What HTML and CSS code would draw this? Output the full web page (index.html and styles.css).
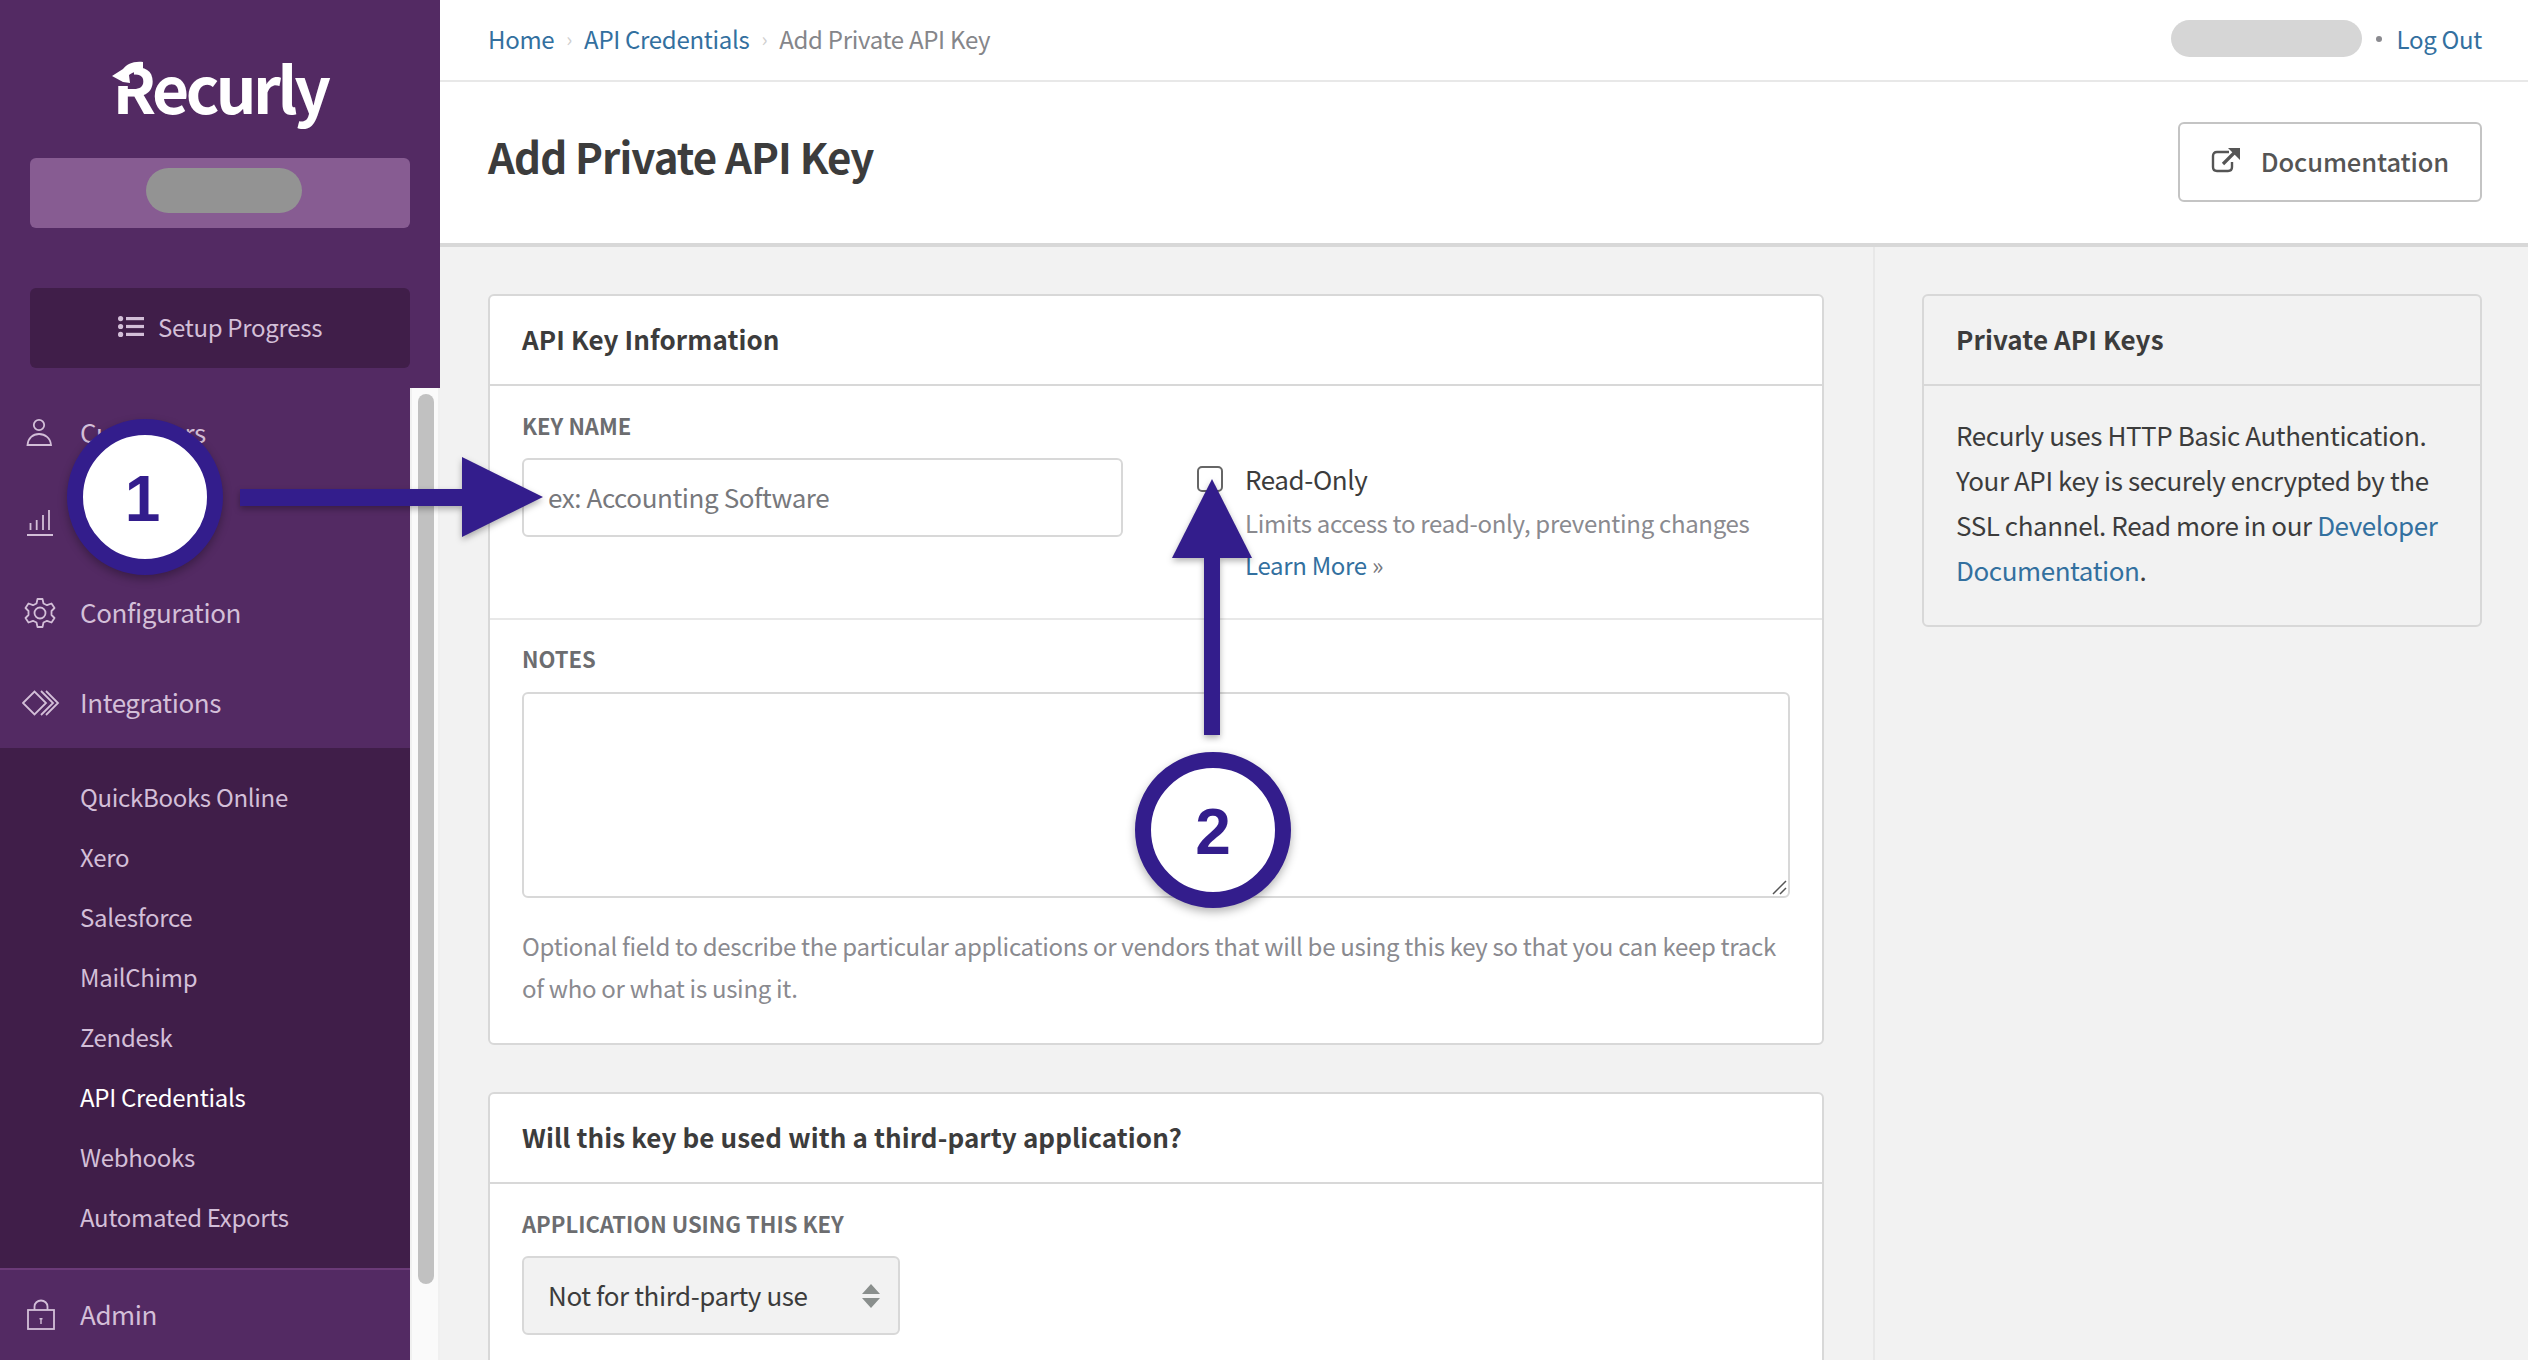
FILE: index.html
```html
<!DOCTYPE html>
<html lang="en">
<head>
<meta charset="utf-8">
<title>Add Private API Key</title>
<link rel="stylesheet" href="styles.css">
</head>
<body>
<div class="app">
  <aside class="sidebar">
    <div class="brand">
      <div class="logo">
        <span>Recurly</span>
        <svg class="logo-arrow" width="40" height="30" viewBox="0 0 40 30"><path d="M4 2 H24 V27 H4 Z" fill="#532a63"/><path d="M2 17 L13 10 C17 5 23 2 33 3 L33 13 C27 12 22 13 19 16 L20 24 L13 23 Z" fill="#fff"/></svg>
      </div>
      <div class="account"><span class="account-mask"></span></div>
      <a class="setup">
        <svg width="26" height="21" viewBox="0 0 26 21"><g fill="#d3bfd8"><circle cx="2.6" cy="2.6" r="2.6"/><circle cx="2.6" cy="10.5" r="2.6"/><circle cx="2.6" cy="18.4" r="2.6"/><rect x="8" y="1" width="18" height="3.2"/><rect x="8" y="8.9" width="18" height="3.2"/><rect x="8" y="16.8" width="18" height="3.2"/></g></svg>
        <span>Setup Progress</span>
      </a>
    </div>
    <div class="nav-wrap">
      <nav class="nav">
        <a class="nav-item">
          <svg class="nav-icon" width="36" height="30" viewBox="0 0 36 30"><g fill="none" stroke="#d3bfd8" stroke-width="1.8"><circle cx="17" cy="7" r="5.2"/><path d="M5.5 27 C6 20 11 16 17 16 C23 16 28.500 20 29 27 Z"/></g></svg>
          <span>Customers</span>
        </a>
        <a class="nav-item">
          <svg class="nav-icon" width="36" height="30" viewBox="0 0 36 30"><g fill="none" stroke="#d3bfd8" stroke-width="2"><path d="M5 27 H31"/><path d="M8.500 22 V15 M14.700 22 V12 M21 22 V7 M27 22 V2" stroke-width="1.800"/></g></svg>
          <span>Analytics</span>
        </a>
        <a class="nav-item">
          <svg class="nav-icon" width="36" height="32" viewBox="0 0 36 32"><g fill="none" stroke="#d3bfd8" stroke-width="1.8" stroke-linejoin="round"><circle cx="18" cy="16" r="5.5"/><path d="M15.5 2 H20.5 L21.5 6.5 L25 8.2 L29.5 6.5 L32.5 11 L29.5 14 V18 L32.5 21 L29.5 25.5 L25 23.8 L21.5 25.5 L20.5 30 H15.5 L14.5 25.5 L11 23.8 L6.500 25.5 L3.500 21 L6.500 18 V14 L3.500 11 L6.500 6.500 L11 8.200 L14.500 6.500 Z"/></g></svg>
          <span>Configuration</span>
        </a>
        <a class="nav-item">
          <svg class="nav-icon" width="38" height="28" viewBox="0 0 38 28"><g fill="none" stroke="#d3bfd8" stroke-width="1.8"><path d="M1 14 L12.500 2.500 L24 14 L12.500 25.500 Z"/><path d="M19 2 L31 14 L19 26 M24 2 L36 14 L24 26"/></g></svg>
          <span>Integrations</span>
        </a>
        <div class="subnav">
          <a>QuickBooks Online</a>
          <a>Xero</a>
          <a>Salesforce</a>
          <a>MailChimp</a>
          <a>Zendesk</a>
          <a class="active">API Credentials</a>
          <a>Webhooks</a>
          <a>Automated Exports</a>
        </div>
        <a class="nav-item admin">
          <svg class="nav-icon" width="30" height="32" viewBox="0 0 30 32"><g fill="none" stroke="#d3bfd8" stroke-width="1.800"><rect x="2" y="11" width="26" height="19"/><path d="M8.500 11 V7.500 A6.500 6 0 0 1 21.500 7.500 V11"/></g><path d="M13.500 19 h3 v1.500 h-.8 v4.500 h-1.400 v-4.500 h-.8 z" fill="#d3bfd8"/></svg>
          <span>Admin</span>
        </a>
      </nav>
      <div class="scrollbar"><div class="thumb"></div></div>
    </div>
  </aside>

  <main class="main">
    <div class="topbar">
      <div class="crumbs">
        <a>Home</a><span class="sep">›</span><a>API Credentials</a><span class="sep">›</span><span class="current">Add Private API Key</span>
      </div>
      <div class="user">
        <span class="user-mask"></span>
        <span class="dot"></span>
        <a>Log Out</a>
      </div>
    </div>
    <header class="page-head">
      <h1>Add Private API Key</h1>
      <a class="doc-btn">
        <svg width="30" height="26" viewBox="0 0 30 26"><g fill="none" stroke="#555" stroke-width="2.400"><path d="M18 5 H6 Q2 5 2 9 V20 Q2 24 6 24 H17 Q21 24 21 20 V15"/><path d="M12 17 L25 4" stroke-width="3.200"/></g><path d="M17 1 H29 V13 Z" fill="#555"/></svg>
        <span>Documentation</span>
      </a>
    </header>
    <div class="content">
      <section class="col-main">
        <div class="card card-info">
          <h2 class="card-title">API Key Information</h2>
          <div class="row row-key">
            <div class="field-key">
              <label class="label">KEY NAME</label>
              <div class="input placeholder">ex: Accounting Software</div>
            </div>
            <div class="readonly">
              <span class="checkbox"></span>
              <div class="readonly-text">
                <div class="readonly-title">Read-Only</div>
                <div class="muted">Limits access to read-only, preventing changes</div>
                <a class="link">Learn More <span class="raquo">»</span></a>
              </div>
            </div>
          </div>
          <div class="row row-notes">
            <label class="label">NOTES</label>
            <div class="textarea">
              <svg class="grip" width="15" height="15" viewBox="0 0 15 15"><path d="M1 14 L14 1 M8 14 L14 8" stroke="#555" stroke-width="1.500"/></svg>
            </div>
            <p class="muted help">Optional field to describe the particular applications or vendors that will be using this key so that you can keep track of who or what is using it.</p>
          </div>
        </div>
        <div class="card card-third">
          <h2 class="card-title">Will this key be used with a third-party application?</h2>
          <div class="row">
            <label class="label">APPLICATION USING THIS KEY</label>
            <div class="select">
              <span>Not for third-party use</span>
              <svg width="18" height="24" viewBox="0 0 18 24"><path d="M9 0 L18 10 H0 Z M9 24 L18 14 H0 Z" fill="#8a8f8d"/></svg>
            </div>
          </div>
        </div>
      </section>
      <aside class="col-side">
        <div class="card side-card">
          <h2 class="card-title">Private API Keys</h2>
          <p class="side-text">Recurly uses HTTP Basic Authentication. Your API key is securely encrypted by the SSL channel. Read more in our <a class="link">Developer Documentation</a>.</p>
        </div>
      </aside>
    </div>
  </main>
</div>

<div class="step step-one">1</div>
<div class="arrow arrow-right"><span class="shaft"></span><span class="head"></span></div>
<div class="step step-two">2</div>
<div class="arrow arrow-up"><span class="head"></span><span class="shaft"></span></div>
</body>
</html>
```
FILE: styles.css
```css
* { box-sizing: border-box; }
html, body { margin: 0; height: 100%; overflow: hidden; }
body {
  font-family: "Noto Sans CJK SC", "Noto Sans", sans-serif;
  font-size: 26px;
  letter-spacing: -.42px;
  color: #3c3c3c;
  background: #fff;
  position: relative;
}
a { color: inherit; text-decoration: none; }
.app { display: flex; height: 1360px; overflow: hidden; }

/* sidebar */
.sidebar { width: 440px; flex: none; background: #532a63; display: flex; flex-direction: column; }
.brand { height: 388px; padding: 0 30px; display: flex; flex-direction: column; flex: none; }
.logo { height: 158px; display: flex; justify-content: center; position: relative; color: #fff; font-weight: 700; font-size: 64px; line-height: 90px; padding-top: 41px; letter-spacing: -3.5px; }
.logo-arrow { position: absolute; left: 80px; top: 59px; }
.account { height: 70px; background: #875c92; border-radius: 6px; display: flex; justify-content: center; padding: 10px 0 0 8px; flex: none; }
.account-mask { width: 156px; height: 45px; border-radius: 23px; background: #939393; }
.setup { margin-top: 60px; height: 80px; padding-bottom: 3px; border-radius: 6px; background: #401e49; color: #d3bfd8; display: flex; align-items: center; justify-content: center; gap: 14px; font-size: 24px; letter-spacing: -.3px; flex: none; }
.nav-wrap { flex: 1; display: flex; min-height: 0; }
.nav { width: 410px; flex: none; display: flex; flex-direction: column; }
.nav-item { height: 90px; padding: 0 0 3px 80px; display: flex; align-items: center; position: relative; color: #d3bfd8; flex: none; }
.nav-icon { position: absolute; left: 22px; top: 50%; transform: translateY(-50%); }
.subnav { background: #401e49; display: flex; flex-direction: column; padding: 20px 0 20px; height: 520px; flex: none; }
.subnav a { height: 60px; padding: 0 0 3px 80px; display: flex; align-items: center; color: #d3bfd8; font-size: 24px; letter-spacing: -.3px; flex: none; }
.subnav a.active { color: #fff; }
.admin { border-top: 2px solid #6b3a78; height: 92px; }
.admin .nav-icon { left: 26px; }
.scrollbar { width: 30px; flex: none; background: #fafafa; border-left: 2px solid #f0f0f0; border-right: 2px solid #f0f0f0; padding: 6px 0 0 6px; }
.thumb { width: 16px; height: 890px; background: #c1c1c1; border-radius: 8px; }

/* main */
.main { flex: 1; min-width: 0; display: flex; flex-direction: column; }
.topbar { height: 82px; flex: none; border-bottom: 2px solid #e8e8e8; padding: 0 46px 3px 48px; display: flex; align-items: center; justify-content: space-between; font-size: 24px; letter-spacing: -.3px; }
.crumbs { display: flex; align-items: center; color: #33709f; }
.sep { color: #cfcfcf; font-size: 20px; margin: 0 12px; }
.current { color: #85868a; }
.user { display: flex; align-items: center; color: #33709f; }
.user-mask { width: 191px; height: 37px; border-radius: 19px; background: #d6d6d6; }
.dot { width: 6px; height: 6px; border-radius: 50%; background: #8a8a8f; margin: 0 15px 0 14px; }
.page-head { height: 165px; flex: none; border-bottom: 4px solid #d8d8d8; padding: 0 46px 0 48px; display: flex; align-items: center; justify-content: space-between; }
.page-head h1 { margin: 0 0 13px; font-size: 42px; font-weight: 700; letter-spacing: -.9px; color: #3c3c3c; line-height: 60px; }
.doc-btn { width: 304px; height: 80px; margin-top: -2px; padding-bottom: 3px; border: 2px solid #c4c4c4; border-radius: 6px; display: flex; align-items: center; justify-content: center; gap: 20px; color: #555; font-size: 25.500px; font-weight: 500; letter-spacing: -.1px; }
.content { flex: 1; min-height: 0; background: #f2f2f2; display: flex; overflow: hidden; }
.col-main { width: 1435px; flex: none; padding: 47px 49px 0 48px; border-right: 2px solid #e8e8e8; display: flex; flex-direction: column; gap: 47px; }
.col-side { flex: 1; padding: 47px 46px 0 47px; }
.card { background: #fff; border: 2px solid #d8d8d8; border-radius: 6px; flex: none; }
.card-title { margin: 0; height: 90px; padding: 0 32px 3px; display: flex; align-items: center; border-bottom: 2px solid #d8d8d8; font-size: 26px; font-weight: 700; letter-spacing: .1px; color: #3c3c3c; }
.card-info { height: 751px; }
.card-third { height: 400px; }
.row { padding: 24px 32px 0; }
.row-key { height: 234px; border-bottom: 2px solid #e8e8e8; display: flex; }
.field-key { width: 601px; flex: none; }
.label { display: block; height: 30px; line-height: 30px; font-size: 22px; font-weight: 700; color: #6c6d70; letter-spacing: 0; }
.input { margin-top: 18px; height: 79px; border: 2px solid #d8d8d8; border-radius: 6px; padding: 0 24px 3px; display: flex; align-items: center; }
.placeholder { color: #77787c; }
.readonly { display: flex; margin: 57px 0 0 74px; }
.checkbox { width: 26px; height: 26px; border: 2px solid #666; border-radius: 5px; flex: none; margin-top: -1px; }
.readonly-text { margin-left: 22px; margin-top: -11px; font-size: 24px; letter-spacing: -.3px; line-height: 42px; }
.readonly-title { font-size: 26px; letter-spacing: -.42px; line-height: 46px; color: #3c3c3c; }
.muted { color: #8a8a8f; font-size: 24px; letter-spacing: -.3px; }
.link { color: #33709f; }
.raquo { color: #77787c; }
.row-notes { padding-top: 23px; }
.textarea { margin-top: 19px; height: 206px; border: 2px solid #d8d8d8; border-radius: 6px; position: relative; }
.grip { position: absolute; right: 1px; bottom: 1px; }
.help { margin: 27px 0 0; line-height: 42px; }
.select { margin-top: 18px; width: 378px; height: 79px; background: #f2f2f2; border: 2px solid #d8d8d8; border-radius: 6px; padding: 0 18px 3px 24px; display: flex; align-items: center; justify-content: space-between; }
.select svg { margin-top: 3px; }
.side-card { height: 333px; background: transparent; }
.side-text { margin: 0; padding: 26px 32px 0; line-height: 45px; }

/* annotations over the page */
.step { position: absolute; width: 156px; height: 156px; padding-top: 4px; border-radius: 50%; border: 16px solid #331d8c; background: #fff; color: #331d8c; font-family: "Liberation Sans", sans-serif; font-weight: 700; font-size: 64px; letter-spacing: 0; display: flex; align-items: center; justify-content: center; box-shadow: 0 4px 10px rgba(0,0,0,.3); }
.step-one { left: 67px; top: 419px; padding-right: 5px; }
.step-two { left: 1135px; top: 752px; }
.arrow { position: absolute; display: flex; align-items: center; filter: drop-shadow(0 3px 3px rgba(0,0,0,.3)); }
.arrow-right { left: 240px; top: 457px; height: 80px; }
.arrow-right .shaft { width: 222px; height: 17px; background: #331d8c; }
.arrow-right .head { width: 0; height: 0; border-left: 81px solid #331d8c; border-top: 40px solid transparent; border-bottom: 40px solid transparent; }
.arrow-up { left: 1172px; top: 479px; width: 80px; flex-direction: column; }
.arrow-up .shaft { width: 16px; height: 177px; background: #331d8c; }
.arrow-up .head { width: 0; height: 0; border-bottom: 79px solid #331d8c; border-left: 40px solid transparent; border-right: 40px solid transparent; }
```
